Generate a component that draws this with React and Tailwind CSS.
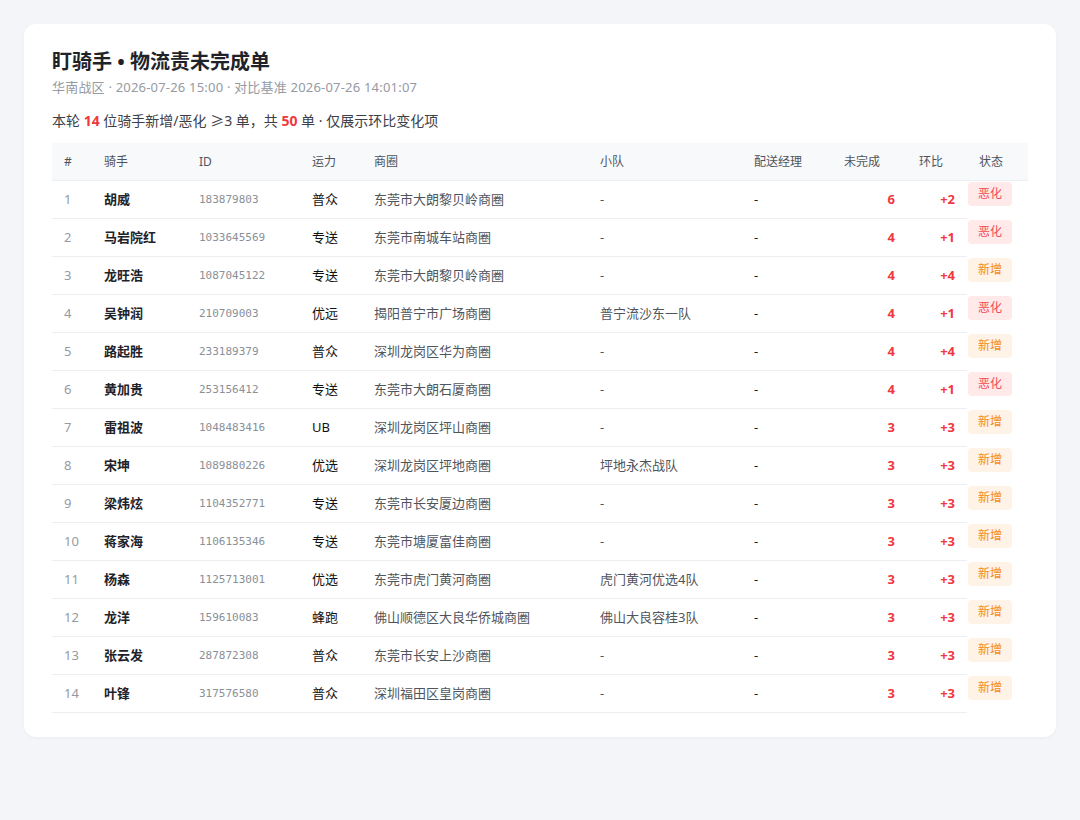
import React from "react";

const rows = [
  [1, "胡威", "183879803", "普众", "东莞市大朗黎贝岭商圈", "-", "-", 6, "+2", "恶化"],
  [2, "马岩院红", "1033645569", "专送", "东莞市南城车站商圈", "-", "-", 4, "+1", "恶化"],
  [3, "龙旺浩", "1087045122", "专送", "东莞市大朗黎贝岭商圈", "-", "-", 4, "+4", "新增"],
  [4, "吴钟润", "210709003", "优远", "揭阳普宁市广场商圈", "普宁流沙东一队", "-", 4, "+1", "恶化"],
  [5, "路起胜", "233189379", "普众", "深圳龙岗区华为商圈", "-", "-", 4, "+4", "新增"],
  [6, "黄加贵", "253156412", "专送", "东莞市大朗石厦商圈", "-", "-", 4, "+1", "恶化"],
  [7, "雷祖波", "1048483416", "UB", "深圳龙岗区坪山商圈", "-", "-", 3, "+3", "新增"],
  [8, "宋坤", "1089880226", "优选", "深圳龙岗区坪地商圈", "坪地永杰战队", "-", 3, "+3", "新增"],
  [9, "梁炜炫", "1104352771", "专送", "东莞市长安厦边商圈", "-", "-", 3, "+3", "新增"],
  [10, "蒋家海", "1106135346", "专送", "东莞市塘厦富佳商圈", "-", "-", 3, "+3", "新增"],
  [11, "杨森", "1125713001", "优选", "东莞市虎门黄河商圈", "虎门黄河优选4队", "-", 3, "+3", "新增"],
  [12, "龙洋", "159610083", "蜂跑", "佛山顺德区大良华侨城商圈", "佛山大良容桂3队", "-", 3, "+3", "新增"],
  [13, "张云发", "287872308", "普众", "东莞市长安上沙商圈", "-", "-", 3, "+3", "新增"],
  [14, "叶锋", "317576580", "普众", "深圳福田区皇岗商圈", "-", "-", 3, "+3", "新增"],
];

const font = { fontFamily: '"Noto Sans", "Noto Sans CJK SC", sans-serif' };

export default function App() {
  return (
    <div className="min-h-[820px] w-full bg-[#f4f5f9] p-6" style={font}>
      <div className="rounded-xl bg-white px-7 pt-6 pb-6 shadow-[0_1px_3px_rgba(0,0,0,0.04)]">
        <h1 className="text-[20px] font-bold leading-[28px] text-[#1f2329]">
          盯骑手 • 物流责未完成单
        </h1>
        <div className="mt-px text-[13px] leading-[20px] tracking-[0.2px] text-[#959aa3]">
          华南战区 · 2026-07-26 15:00 · 对比基准 2026-07-26 14:01:07
        </div>
        <div className="mt-[14px] text-[14px] leading-[20px] text-[#3c4048]">
          本轮 <span className="font-bold text-[#f0383e]">14</span> 位骑手新增/恶化 ≥3 单，共{" "}
          <span className="font-bold text-[#f0383e]">50</span> 单 · 仅展示环比变化项
        </div>

        <div className="mt-3">
          <div className="grid h-[38px] grid-cols-[40px_95px_113px_62px_226px_154px_90px_75px_60px_61px] items-center border-b border-[#eceef2] bg-[#f8f9fb] text-[12px] text-[#4e535b]">
            <div className="pl-3">#</div>
            <div className="pl-3">骑手</div>
            <div className="pl-3">ID</div>
            <div className="pl-3">运力</div>
            <div className="pl-3">商圈</div>
            <div className="pl-3">小队</div>
            <div className="pl-3">配送经理</div>
            <div className="pl-3">未完成</div>
            <div className="pl-3">环比</div>
            <div className="pl-3">状态</div>
          </div>
          {rows.map((r) => (
            <div key={r[0]} className="flex items-start">
              <div className="grid h-[38px] grid-cols-[40px_95px_113px_62px_226px_154px_90px_75px_60px] items-center border-b border-[#eceef2] pt-px text-[13px]">
                <div className="pl-3 text-[#959aa3]">{r[0]}</div>
                <div className="pl-3 font-bold text-[#1f2329]">{r[1]}</div>
                <div
                  className="pl-3 pt-px text-[11px] text-[#8a8f98]"
                  style={{ fontFamily: '"DejaVu Sans Mono", "Liberation Mono", monospace' }}
                >
                  {r[2]}
                </div>
                <div className="pl-3 text-[#111]">{r[3]}</div>
                <div className="pl-3 text-[#50555d]">{r[4]}</div>
                <div className="pl-3 text-[#50555d]">{r[5]}</div>
                <div className="pl-3 text-[#1f2329]">{r[6]}</div>
                <div className="pr-3 text-right font-bold text-[#f0383e]">{r[7]}</div>
                <div className="pr-3 text-right font-bold text-[#f0383e]">{r[8]}</div>
              </div>
              <div
                className={
                  r[9] === "恶化"
                    ? "ml-px mt-px flex h-6 w-11 items-center justify-center rounded bg-[#ffe9e9] text-[12px] text-[#f04a55]"
                    : "ml-px mt-px flex h-6 w-11 items-center justify-center rounded bg-[#fff2e6] text-[12px] text-[#f58c16]"
                }
              >
                {r[9]}
              </div>
            </div>
          ))}
        </div>
      </div>
    </div>
  );
}
